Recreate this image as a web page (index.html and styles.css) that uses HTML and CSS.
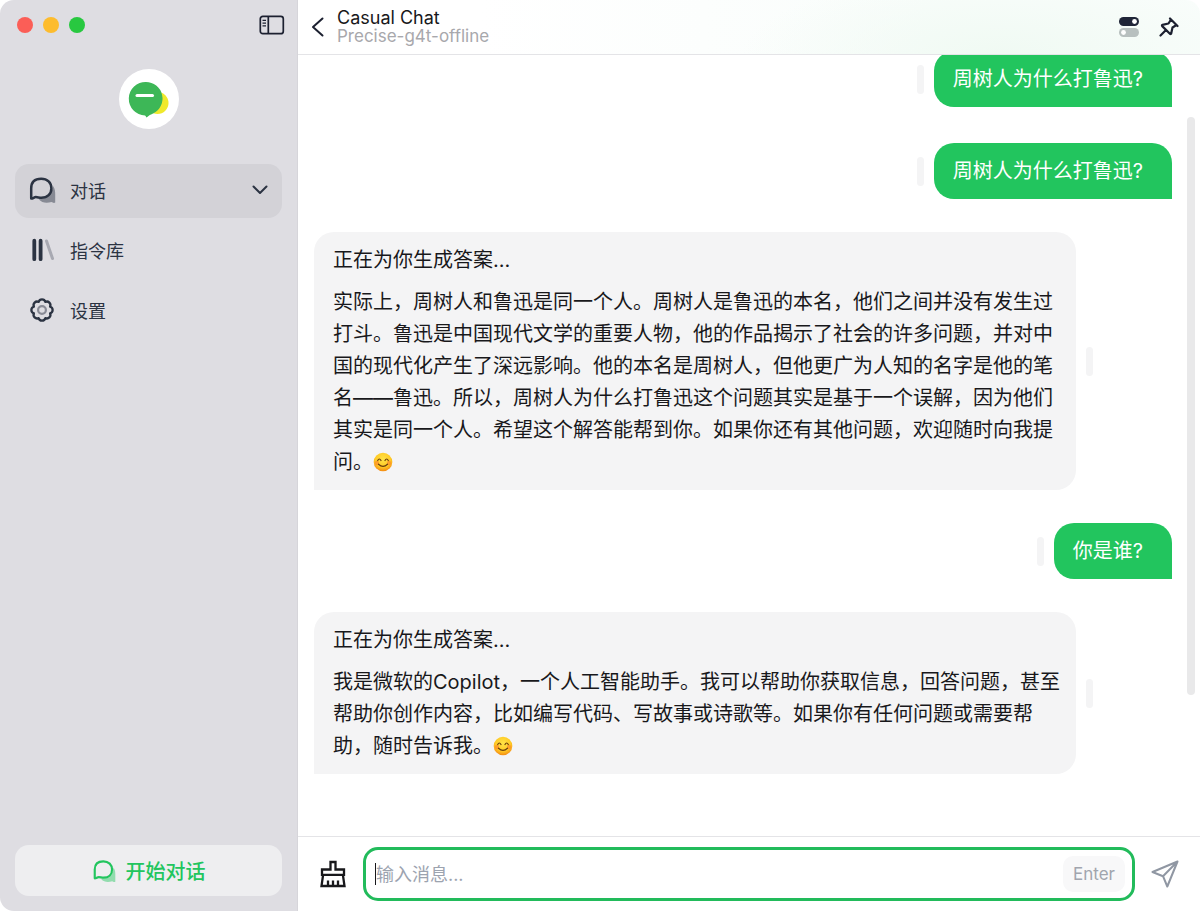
FILE: index.html
```html
<!DOCTYPE html>
<html lang="zh-CN">
<head>
<meta charset="utf-8">
<meta name="viewport" content="width=device-width, initial-scale=1">
<title>Casual Chat</title>
<link rel="stylesheet" href="styles.css">
</head>
<body>
<svg class="defs" width="0" height="0" aria-hidden="true">
  <symbol id="bubbles" viewBox="0 0 28 28">
    <path d="M25 10c2 2.500 2.200 5.500 2.200 8v8.600c-1.700 1-2.500-.3-3.700-.6-5 1.300-9.500 1-12.800-2.800 6.800-.2 13.300-3.700 14.300-13.200z" fill="currentColor" opacity=".45"/>
    <path d="M3.200 22.600V12.300C3.200 6 7 2.700 13.200 2.700c6.200 0 10.200 4 10.200 9.600 0 5.700-4 9.500-10 9.500-2.300 0-3.600-.7-5.600-.7-1.800 0-2.600 1.500-4.600 1.500z" fill="none" stroke="currentColor" stroke-width="2.500" stroke-linejoin="round"/>
  </symbol>
  <symbol id="smile" viewBox="0 0 20 20">
    <radialGradient id="face" cx=".5" cy=".35" r=".65"><stop offset="0" stop-color="#ffe348"/><stop offset=".65" stop-color="#ffc924"/><stop offset="1" stop-color="#f48a12"/></radialGradient>
    <circle cx="10" cy="10" r="9.300" fill="url(#face)"/>
    <circle cx="4" cy="11" r="2.200" fill="#fb7b2e" opacity=".55"/><circle cx="16" cy="11" r="2.200" fill="#fb7b2e" opacity=".55"/>
    <path d="M4.700 8.500q1.600-3 3.300 0M12 8.500q1.600-3 3.300 0M5.500 12.200q4.500 4.200 9 0" fill="none" stroke="#6b3d0c" stroke-width="1.200" stroke-linecap="round"/>
  </symbol>
</svg>
<div class="window">
  <aside class="sidebar">
    <div class="titlebar">
      <div class="lights"><span class="light close"></span><span class="light minimize"></span><span class="light zoom"></span></div>
      <button class="icon-button" type="button" aria-label="Toggle sidebar">
        <svg width="26" height="20" viewBox="0 0 26 20" fill="none" stroke="currentColor"><rect x="1.300" y="1.300" width="23" height="17.400" rx="2.500" stroke-width="1.700"/><path d="M9.300 1v18" stroke-width="1.700"/><path d="M3.500 5.400h3.500M3.500 8.100h3.500M3.500 10.800h3.500" stroke-width="1.200"/></svg>
      </button>
    </div>
    <div class="avatar">
      <svg width="60" height="60" viewBox="0 0 60 60"><circle cx="38.500" cy="34" r="11" fill="#f0e92b"/><path d="M27 13a16.500 16.500 0 0 1 7.500 31.200c-2.500 1.300-5 2.200-6.800 4.200-1-.4-.6-1.700-1.700-2A16.500 16.500 0 0 1 27 13z" fill="#3db757"/><path d="M18 26.500h15.500" stroke="#fff" stroke-width="3" stroke-linecap="round"/></svg>
    </div>
    <nav class="nav">
      <button class="nav-item active" type="button">
        <svg class="nav-icon" width="28" height="28"><use href="#bubbles"/></svg><span class="nav-label">对话</span>
        <svg width="16" height="10" viewBox="0 0 16 10" fill="none" stroke="currentColor" stroke-width="2" stroke-linecap="round" stroke-linejoin="round"><path d="M1.500 1.500 8 8l6.500-6.500"/></svg>
      </button>
      <button class="nav-item" type="button">
        <svg class="nav-icon" width="28" height="28" viewBox="0 0 28 28" fill="none" stroke="currentColor" stroke-width="3.800" stroke-linecap="round"><path d="M6.300 4.700v18.500M12.600 4.700v18.500"/><path d="M18.500 5l6 17.500" stroke-width="3" opacity=".3"/></svg><span class="nav-label">指令库</span>
      </button>
      <button class="nav-item" type="button">
        <svg class="nav-icon" width="28" height="28" viewBox="0 0 28 28" fill="none" stroke="currentColor" stroke-linejoin="round"><path d="M10.600 5.900a3.550 3.550 0 0 1 6.800 0a3.550 3.550 0 0 1 4.700 4.700a3.550 3.550 0 0 1 0 6.800a3.550 3.550 0 0 1-4.700 4.700a3.550 3.550 0 0 1-6.800 0a3.550 3.550 0 0 1-4.700-4.700a3.550 3.550 0 0 1 0-6.800a3.550 3.550 0 0 1 4.700-4.700z" stroke-width="2.300"/><circle cx="14" cy="14" r="3.900" stroke-width="2.200" opacity=".48"/></svg><span class="nav-label">设置</span>
      </button>
    </nav>
    <button class="start" type="button"><svg width="24" height="24"><use href="#bubbles"/></svg>开始对话</button>
  </aside>
  <main class="chat">
    <header class="chat-header">
      <button class="icon-button" type="button" aria-label="Back"><svg width="14" height="20" viewBox="0 0 14 20" fill="none" stroke="currentColor" stroke-width="2" stroke-linecap="round" stroke-linejoin="round"><path d="M11.500 1.500 2 10l9.500 8.500"/></svg></button>
      <div class="heading"><h1 class="title">Casual Chat</h1><p class="subtitle">Precise-g4t-offline</p></div>
      <div class="tools">
        <button class="icon-button" type="button" aria-label="Options"><svg width="20" height="20" viewBox="0 0 20 20"><rect width="20" height="9" rx="4.500" fill="#202638"/><circle cx="15.500" cy="4.500" r="2.400" fill="#fff"/><rect y="11" width="20" height="9" rx="4.500" fill="#b8c0bf"/><circle cx="4.500" cy="15.500" r="2.400" fill="#fff"/></svg></button>
        <button class="icon-button" type="button" aria-label="Pin"><svg width="20" height="20" viewBox="0 0 20 20" fill="none" stroke="currentColor" stroke-width="2.200" stroke-linecap="round" stroke-linejoin="round"><path d="M11 1.500 18.500 9M12 2.500 9.500 6.500 3.500 7.800a.8.800 0 0 0-.3 1.300l7.700 7.700a.8.800 0 0 0 1.300-.3l1.300-6 4-2.500M7 13 1.500 18.500"/></svg></button>
      </div>
    </header>
    <section class="messages">
      <article class="message mine"><span class="grip"></span><div class="bubble">周树人为什么打鲁迅?</div></article>
      <article class="message mine"><span class="grip"></span><div class="bubble">周树人为什么打鲁迅?</div></article>
      <article class="message"><div class="bubble"><p>正在为你生成答案...</p><p>实际上，周树人和鲁迅是同一个人。周树人是鲁迅的本名，他们之间并没有发生过打斗。鲁迅是中国现代文学的重要人物，他的作品揭示了社会的许多问题，并对中国的现代化产生了深远影响。他的本名是周树人，但他更广为人知的名字是他的笔名——鲁迅。所以，周树人为什么打鲁迅这个问题其实是基于一个误解，因为他们其实是同一个人。希望这个解答能帮到你。如果你还有其他问题，欢迎随时向我提问。<svg class="emoji" role="img" aria-label="😊" width="20" height="20"><use href="#smile"/></svg></p></div><span class="grip"></span></article>
      <article class="message mine"><span class="grip"></span><div class="bubble">你是谁?</div></article>
      <article class="message"><div class="bubble"><p>正在为你生成答案...</p><p>我是微软的Copilot，一个人工智能助手。我可以帮助你获取信息，回答问题，甚至帮助你创作内容，比如编写代码、写故事或诗歌等。如果你有任何问题或需要帮助，随时告诉我。<svg class="emoji" role="img" aria-label="😊" width="20" height="20"><use href="#smile"/></svg></p></div><span class="grip"></span></article>
      <div class="scroll-thumb"></div>
    </section>
    <footer class="composer">
      <button class="icon-button clear" type="button" aria-label="Clear conversation"><svg width="28" height="28" viewBox="-1 0 28 28" fill="none" stroke="currentColor" stroke-width="2.300" stroke-linejoin="miter"><path d="M10.500 9.500V2h5v7.500h8.500v5.300H2V9.500zM3.100 14.800 1.500 26h23l-1.600-11.200M8 26v-5.500M13 26v-5.500M18 26v-5.500"/></svg></button>
      <div class="field">
        <input class="message-input" type="text" placeholder="输入消息..." aria-label="输入消息">
        <span class="caret"></span>
        <kbd class="key">Enter</kbd>
      </div>
      <button class="icon-button send" type="button" aria-label="Send"><svg width="28" height="28" viewBox="0 0 28 28" fill="none" stroke="currentColor" stroke-width="2" stroke-linejoin="round"><path d="M26.500 1.500 1.500 12l10.500 4.200 4.300 10.300zM26.500 1.500 12 16.200"/></svg></button>
    </footer>
  </main>
</div>
</body>
</html>
```
FILE: styles.css
```css
* { box-sizing: border-box; }
body { margin: 0; background: #fff; color: #18181b; font-family: Inter, "Noto Sans CJK SC", sans-serif; }
h1, p { margin: 0; font-weight: 400; }
button { border: 0; padding: 0; background: none; color: inherit; font: inherit; cursor: pointer; }
svg { display: block; flex: none; }
.defs { position: absolute; }
.window { display: grid; grid-template-columns: 298px minmax(0, 1fr); grid-template-rows: minmax(0, 1fr); height: 100vh; border-radius: 14px; overflow: hidden; }
.icon-button { display: flex; color: #1c2030; }

.sidebar { display: flex; flex-direction: column; padding: 15px 15px; background: #dedde2; border-right: 1px solid #d6d5da; }
.titlebar { display: flex; justify-content: space-between; align-items: center; height: 20px; padding: 0 0 0 2px; margin-right: -3px; }
.lights { display: flex; gap: 10px; }
.light { width: 16px; height: 16px; border-radius: 50%; }
.close { background: #fb5e57; }
.minimize { background: #fdbc2e; }
.zoom { background: #28c840; }
.avatar { width: 60px; height: 60px; margin: 34px auto 35px; border-radius: 50%; background: #fff; }
.nav { display: flex; flex-direction: column; gap: 6px; }
.nav-item { display: flex; align-items: center; height: 54px; padding: 0 14px 2px 13px; border-radius: 14px; color: #2b3342; font-size: 18px; text-align: left; }
.nav-item.active { background: #d3d2d7; }
.nav-label { flex: 1; margin-left: 14px; }
.start { display: flex; align-items: center; justify-content: center; gap: 10px; height: 51px; margin-top: auto; border-radius: 14px; background: #eeeef0; color: #22c55e; font-size: 20px; font-weight: 500; }

.chat { display: flex; flex-direction: column; min-width: 0; }
.chat-header { display: flex; flex: none; align-items: center; height: 55px; padding: 0 21px 0 13px; border-bottom: 1px solid #e4e4e7; background: radial-gradient(ellipse 260px 80px at 78% 100%, #f0faf3, transparent), linear-gradient(90deg, #fff 20%, #f9fdfb 70%); }
.heading { flex: 1; margin-left: 12px; }
.title, .subtitle { font-size: 18px; line-height: 19px; }
.title { color: #18181b; }
.subtitle { color: #a8a8ac; font-size: 17px; }
.tools { display: flex; align-items: center; gap: 20px; }

.messages { position: relative; display: flex; flex: 1; flex-direction: column; justify-content: flex-end; gap: 33px; min-height: 0; padding: 0 28px 62px 16px; overflow: hidden; }
.message { display: flex; flex: none; align-items: center; gap: 10px; font-size: 20px; line-height: 32px; }
.mine { justify-content: flex-end; }
.mine + .mine { margin-top: 3px; }
.bubble { max-width: calc(100% - 96px); padding: 12px 15px 12px 19px; border-radius: 20px 20px 20px 0; background: #f4f4f5; }
.bubble p + p { margin-top: 10px; }
.mine .bubble { padding-right: 29px; border-radius: 20px 20px 0 20px; background: #22c55e; color: #fff; }
.grip { flex: none; width: 7px; height: 29px; border-radius: 4px; background: #f4f4f5; }
.emoji { display: inline-block; vertical-align: -3px; }
.scroll-thumb { position: absolute; top: 8%; right: 5px; width: 8px; height: 74%; border-radius: 4px; background: #e9e9ea; }

.composer { display: flex; flex: none; align-items: center; gap: 16px; height: 75px; padding: 0 21px; border-top: 1px solid #e4e4e7; }
.clear { color: #18181b; }
.field { position: relative; display: flex; flex: 1; align-items: center; height: 54px; padding: 0 7px 0 10px; border: 3px solid #22bb5b; border-radius: 15px; }
.message-input { flex: 1; min-width: 0; height: 40px; padding: 0; border: 0; outline: 0; background: none; color: #18181b; font: inherit; font-size: 18px; }
.message-input::placeholder { color: #9ca3af; opacity: 1; }
.caret { position: absolute; left: 9px; width: 1px; height: 22px; background: #18181b; }
.key { display: flex; align-items: center; height: 36px; padding: 0 10px; border-radius: 10px; background: #f8f8f9; color: #a1a5ae; font-family: inherit; font-size: 17px; }
.send { color: #9097a3; }
```
